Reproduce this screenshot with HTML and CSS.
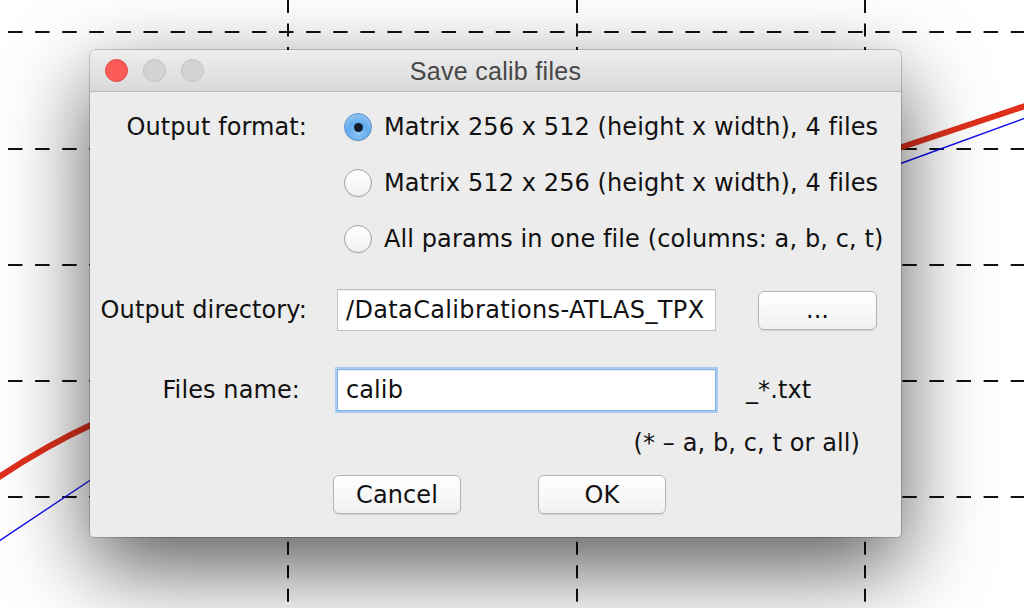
FILE: index.html
```html
<!DOCTYPE html>
<html lang="en">
<head>
<meta charset="utf-8">
<title>Save calib files</title>
<link rel="stylesheet" href="styles.css">
</head>
<body>
<div class="desktop">
  <svg class="plot" width="1024" height="608" viewBox="0 0 1024 608" xmlns="http://www.w3.org/2000/svg">
    <g class="hgrid">
      <line x1="8" y1="32" x2="1024" y2="32"/>
      <line x1="8" y1="149" x2="1024" y2="149"/>
      <line x1="8" y1="265" x2="1024" y2="265"/>
      <line x1="8" y1="381" x2="1024" y2="381"/>
      <line x1="8" y1="497" x2="1024" y2="497"/>
    </g>
    <g class="vgrid">
      <line x1="288" y1="0" x2="288" y2="608"/>
      <line x1="577" y1="0" x2="577" y2="608"/>
      <line x1="865" y1="0" x2="865" y2="608"/>
    </g>
    <path class="curve-red" d="M-4,479 Q45,446 95,423 L902,147 L1028,105"/>
    <path class="curve-blue" d="M-4,543 L95,477 L902,163 L1028,117"/>
  </svg>

  <div class="dialog">
    <div class="titlebar">
      <div class="lights">
        <span class="light light-close"></span>
        <span class="light light-off"></span>
        <span class="light light-off"></span>
      </div>
      <div class="title">Save calib files</div>
      <div class="spacer"></div>
    </div>

    <div class="content">
      <div class="row row-format">
        <div class="label">Output format:</div>
        <div class="radios">
          <div class="radio"><span class="radio-circle radio-checked"><span class="radio-dot"></span></span><span>Matrix 256 x 512 (height x width), 4 files</span></div>
          <div class="radio"><span class="radio-circle"></span><span>Matrix 512 x 256 (height x width), 4 files</span></div>
          <div class="radio"><span class="radio-circle"></span><span>All params in one file (columns: a, b, c, t)</span></div>
        </div>
      </div>

      <div class="row row-dir">
        <div class="label">Output directory:</div>
        <div class="field"><span class="field-text field-text-end">/DataCalibrations-ATLAS_TPX</span></div>
        <div class="button button-browse">...</div>
      </div>

      <div class="row row-name">
        <div class="label label-name">Files name:</div>
        <div class="field field-focus"><span class="field-text">calib</span></div>
        <div class="suffix">_*.txt</div>
      </div>

      <div class="row row-hint">
        <div class="hint">(* – a, b, c, t or all)</div>
      </div>

      <div class="row row-buttons">
        <div class="button button-action">Cancel</div>
        <div class="button button-action">OK</div>
      </div>
    </div>
  </div>
</div>
</body>
</html>
```
FILE: styles.css
```css
html, body {
  margin: 0;
  padding: 0;
  background: #ffffff;
}

.desktop {
  position: relative;
  width: 1024px;
  height: 608px;
  overflow: hidden;
  background: #ffffff;
}

.plot {
  position: absolute;
  left: 0;
  top: 0;
  display: block;
}

.hgrid line {
  stroke: #111;
  stroke-width: 2;
  stroke-dasharray: 14.5 12.6;
}

.vgrid line {
  stroke: #111;
  stroke-width: 2;
  stroke-dasharray: 13 10.55;
}

.curve-red {
  fill: none;
  stroke: #e0301c;
  stroke-width: 6;
  stroke-linejoin: round;
}

.curve-blue {
  fill: none;
  stroke: #1010ee;
  stroke-width: 1.4;
}

.dialog {
  position: absolute;
  left: 90px;
  top: 50px;
  width: 811px;
  height: 487px;
  background: #ececec;
  border-radius: 6px 6px 4px 4px;
  box-shadow: 0 30px 85px rgba(0, 0, 0, 0.66), 0 0 0 1px rgba(0, 0, 0, 0.18);
  font-family: "DejaVu Sans", "Liberation Sans", sans-serif;
  font-size: 24px;
  letter-spacing: 0.1px;
  color: #111;
  display: flex;
  flex-direction: column;
}

.titlebar {
  height: 41px;
  flex: none;
  border-bottom: 1px solid #b9b9b9;
  border-radius: 6px 6px 0 0;
  background: linear-gradient(#eeeeee, #d9d9d9);
  display: grid;
  grid-template-columns: 1fr auto 1fr;
  align-items: center;
}

.lights {
  display: flex;
  align-items: center;
  gap: 15px;
  padding-left: 15px;
}

.light {
  width: 21px;
  height: 21px;
  border-radius: 50%;
  display: block;
}

.light-close {
  background: #fc5b57;
  border: 1px solid #e24641;
}

.light-off {
  background: #d3d3d3;
  border: 1px solid #c2c2c2;
}

.title {
  font-family: "Liberation Sans", Arial, sans-serif;
  font-size: 25px;
  letter-spacing: 0.3px;
  color: #474747;
  padding-top: 1px;
}

.content {
  padding: 13px 0 22px 0;
  display: flex;
  flex-direction: column;
}

.row {
  display: flex;
  align-items: center;
}

.label {
  width: 217px;
  flex: none;
  text-align: right;
  white-space: nowrap;
}

.label-name {
  width: 210px;
  padding-right: 7px;
}

.row-format {
  align-items: flex-start;
}

.row-format .label {
  line-height: 44px;
}

.radios {
  margin-left: 37px;
  display: flex;
  flex-direction: column;
  gap: 12px;
}

.radio {
  height: 44px;
  display: flex;
  align-items: center;
  gap: 12px;
  white-space: nowrap;
}

.radio-circle {
  width: 26px;
  height: 26px;
  border-radius: 50%;
  border: 1px solid #a3a3a3;
  background: linear-gradient(#ffffff, #f1f1f1);
  box-shadow: 0 1px 1px rgba(0, 0, 0, 0.08);
  display: flex;
  align-items: center;
  justify-content: center;
  flex: none;
}

.radio-checked {
  border-color: #5b8fcf;
  background: radial-gradient(circle at 50% 75%, #8fc5f5 0%, #62abee 45%, #a8d2f6 100%);
}

.radio-dot {
  width: 9px;
  height: 9px;
  border-radius: 50%;
  background: #141a2c;
}

.row-dir {
  margin-top: 28px;
  height: 42px;
}

.field {
  margin-left: 30px;
  width: 377px;
  height: 40px;
  background: #ffffff;
  border: 1px solid #c0c0c0;
  box-shadow: inset 0 1px 1px rgba(0, 0, 0, 0.08);
  display: flex;
  align-items: center;
  overflow: hidden;
  flex: none;
}

.field-text {
  padding-left: 8px;
  white-space: nowrap;
}

.field-text-end {
  letter-spacing: 0.35px;
}

.field-focus {
  border-color: #7fb0e6;
  box-shadow: 0 0 0 2px #a9cdf2, inset 0 1px 1px rgba(0, 0, 0, 0.06);
}

.button {
  height: 37px;
  border: 1px solid #b4b4b4;
  border-radius: 6px;
  background: linear-gradient(#ffffff, #f1f1f1);
  box-shadow: 0 1px 1px rgba(0, 0, 0, 0.12);
  display: flex;
  align-items: center;
  justify-content: center;
  flex: none;
  box-sizing: content-box;
}

.button-browse {
  margin-left: 42px;
  width: 117px;
}

.row-name {
  margin-top: 38px;
  height: 42px;
}

.suffix {
  margin-left: 30px;
}

.row-hint {
  margin-top: 18px;
  height: 28px;
  justify-content: flex-end;
  padding-right: 41px;
}

.row-buttons {
  margin-top: 18px;
  padding-left: 243px;
  gap: 77px;
}

.button-action {
  width: 126px;
}
```
